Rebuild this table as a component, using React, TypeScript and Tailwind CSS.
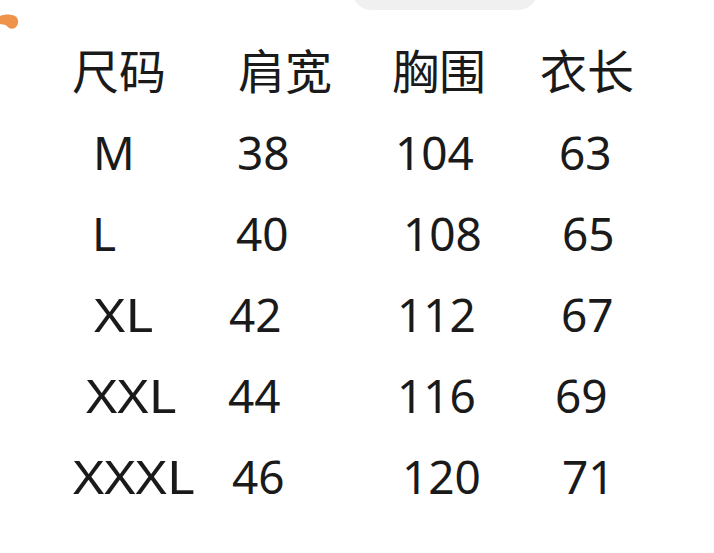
const ROWS = [
  { cells: ["尺码", "肩宽", "胸围", "衣长"], pads: [72, 18, 12, 0] },
  { cells: ["M", "38", "104", "63"], pads: [93, 17, 15, 19] },
  { cells: ["L", "40", "108", "65"], pads: [92, 16, 23, 22] },
  { cells: ["XL", "42", "112", "67"], pads: [94, 9, 17, 21] },
  { cells: ["XXL", "44", "116", "69"], pads: [86, 8, 17, 15] },
  { cells: ["XXXL", "46", "120", "71"], pads: [73, 12, 22, 22] },
];

const COL_WIDTHS = ["w-[220px]", "w-[160px]", "w-[160px]", "w-[174px]"];

export default function App() {
  return (
    <div className="relative h-[553px] w-[714px] overflow-hidden bg-white">
      {/* top notch */}
      <div className="absolute left-[352px] top-[-30px] h-[40px] w-[186px] rounded-[22px] bg-[#f0f0f0]" />
      {/* orange dot */}
      <svg className="absolute left-0 top-[14px]" width="20" height="16" viewBox="0 0 20 16">
        <path
          d="M0 2 C4 0 11 0 15 2 C19 4 19 10 16 13 C13 16 9 15 7 12 C5 10 2 11 0 10 Z"
          fill="#f0934a"
        />
      </svg>

      <div
        className="pt-[31px] text-[46px] leading-[81px] text-[#1a1a1a]"
        style={{ fontFamily: '"Noto Sans", "Noto Sans CJK SC", sans-serif' }}
      >
        {ROWS.map((row, i) => (
          <div key={i} className={`flex ${i === 0 ? "text-[47px]" : ""}`}>
            {row.cells.map((c, j) => (
              <div key={j} className={`${COL_WIDTHS[j]} shrink-0`} style={{ paddingLeft: row.pads[j] }}>
                <span
                  className={`inline-block ${
                    j === 0 && c.includes("X") ? "origin-left scale-x-[1.16]" : ""
                  }`}
                >
                  {c}
                </span>
              </div>
            ))}
          </div>
        ))}
      </div>
    </div>
  );
}
